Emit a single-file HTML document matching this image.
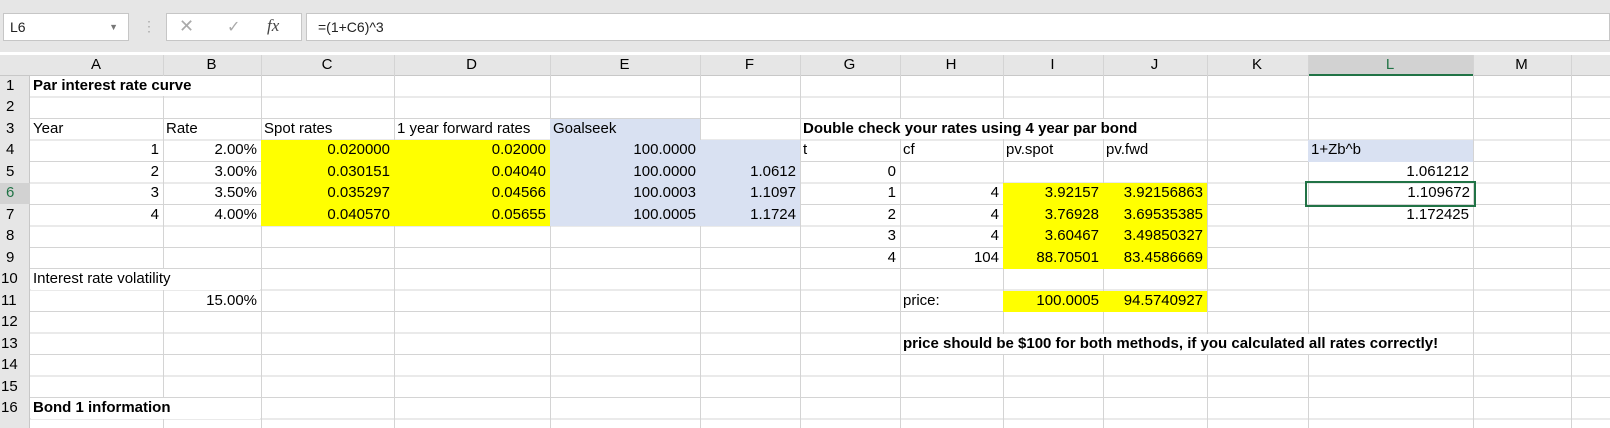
<!DOCTYPE html>
<html><head><meta charset="utf-8"><style>
*{margin:0;padding:0;box-sizing:border-box}
body{width:1610px;height:428px;overflow:hidden;background:#fff;font-family:"Liberation Sans",Arial,sans-serif;position:relative;font-size:15px}
.top{position:absolute;left:0;top:0;width:1610px;height:52px;background:#e6e6e6}
.nb{position:absolute;left:3px;top:13px;width:126px;height:28px;background:#fff;border:1px solid #c6c6c6;font-size:14px;line-height:26px;padding-left:6px;color:#222}
.fx{position:absolute;left:166px;top:13px;width:136px;height:28px;background:#fff;border:1px solid #c6c6c6}
.fb{position:absolute;left:306px;top:13px;width:1304px;height:28px;background:#fff;border:1px solid #c6c6c6;font-size:14px;line-height:26px;padding-left:11px;color:#222}
.hl{position:absolute;left:0;top:76px;width:1610px;height:344px;background:repeating-linear-gradient(to bottom,transparent 0,transparent 20.47px,#d4d4d4 20.47px,#d4d4d4 21.47px)}
.v{position:absolute;top:55px;height:373px;width:1px;background:#d4d4d4}
.hdr{position:absolute;left:0;top:55px;width:1610px;height:21px;background:#e6e6e6;border-bottom:1px solid #c8c8c8}
.rhc{position:absolute;left:0;top:76px;width:30px;height:352px;background:#e6e6e6;border-right:1px solid #c8c8c8}
.g{position:absolute;left:0;top:55px;display:grid;grid-template-columns:30px 133px 98px 133px 156px 150px 100px 100px 103px 100px 104px 101px 165px 98px;grid-template-rows:21px repeat(16,21.47px)}
.g>div{padding:0 3px;white-space:nowrap;line-height:20px;border-right:1px solid transparent;border-bottom:1px solid transparent}
.c{text-align:center}
.r{text-align:right}.y{background:#ffff00}.bl{background:#d9e1f2}.b{font-weight:bold}
.w{background:#fff;background-clip:padding-box;margin-left:1px;padding-left:2px!important}
.rn{padding-left:6px!important}
</style></head><body>
<div class="top"></div>
<div class="nb">L6<span style="position:absolute;right:10px;top:0;font-size:9px;color:#777">▼</span></div>
<div style="position:absolute;left:142px;top:18px;color:#aaa;font-size:14px">⋮</div>
<div class="fx"><span style="position:absolute;left:12px;top:2px;color:#aaa;font-size:18px">✕</span><span style="position:absolute;left:60px;top:3px;color:#aaa;font-size:16px">✓</span><span style="position:absolute;left:100px;top:2px;font-family:'Liberation Serif',serif;font-style:italic;font-size:17px;color:#444">fx</span></div>
<div class="fb">=(1+C6)^3</div>
<div class="hl"></div>
<div class="hdr"></div>
<div class="rhc"></div>
<div style="position:absolute;left:1308px;top:55px;width:165px;height:21px;background:#d2d2d2;border-bottom:2px solid #217346"></div>
<div style="position:absolute;left:0;top:183px;width:30px;height:21px;background:#d2d2d2"></div>
<div class="v" style="left:163px"></div><div class="v" style="left:261px"></div><div class="v" style="left:394px"></div><div class="v" style="left:550px"></div><div class="v" style="left:700px"></div><div class="v" style="left:800px"></div><div class="v" style="left:900px"></div><div class="v" style="left:1003px"></div><div class="v" style="left:1103px"></div><div class="v" style="left:1207px"></div><div class="v" style="left:1308px"></div><div class="v" style="left:1473px"></div><div class="v" style="left:1571px"></div>
<div class="g">
<div style="grid-area:1/2" class="c">A</div><div style="grid-area:1/3" class="c">B</div><div style="grid-area:1/4" class="c">C</div><div style="grid-area:1/5" class="c">D</div><div style="grid-area:1/6" class="c">E</div><div style="grid-area:1/7" class="c">F</div><div style="grid-area:1/8" class="c">G</div><div style="grid-area:1/9" class="c">H</div><div style="grid-area:1/10" class="c">I</div><div style="grid-area:1/11" class="c">J</div><div style="grid-area:1/12" class="c">K</div><div style="grid-area:1/13;color:#217346" class="c">L</div><div style="grid-area:1/14" class="c">M</div>
<div style="grid-area:2/1" class="rn">1</div><div style="grid-area:3/1" class="rn">2</div><div style="grid-area:4/1" class="rn">3</div><div style="grid-area:5/1" class="rn">4</div><div style="grid-area:6/1" class="rn">5</div><div style="grid-area:7/1;color:#217346" class="rn">6</div><div style="grid-area:8/1" class="rn">7</div><div style="grid-area:9/1" class="rn">8</div><div style="grid-area:10/1" class="rn">9</div><div style="grid-area:11/1;padding-left:1px">10</div><div style="grid-area:12/1;padding-left:1px">11</div><div style="grid-area:13/1;padding-left:1px">12</div><div style="grid-area:14/1;padding-left:1px">13</div><div style="grid-area:15/1;padding-left:1px">14</div><div style="grid-area:16/1;padding-left:1px">15</div><div style="grid-area:17/1;padding-left:1px">16</div>
<div style="grid-area:2/2/3/4" class="b w">Par interest rate curve</div>
<div style="grid-area:4/2">Year</div><div style="grid-area:4/3">Rate</div><div style="grid-area:4/4">Spot rates</div><div style="grid-area:4/5">1 year forward rates</div><div style="grid-area:4/6" class="bl">Goalseek</div><div style="grid-area:4/8/5/12" class="b w">Double check your rates using 4 year par bond</div>
<div style="grid-area:5/2" class="r">1</div><div style="grid-area:5/3" class="r">2.00%</div><div style="grid-area:5/4" class="r y">0.020000</div><div style="grid-area:5/5" class="r y">0.02000</div><div style="grid-area:5/6" class="r bl">100.0000</div><div style="grid-area:5/7" class="bl"></div><div style="grid-area:5/8">t</div><div style="grid-area:5/9">cf</div><div style="grid-area:5/10">pv.spot</div><div style="grid-area:5/11">pv.fwd</div><div style="grid-area:5/13" class="bl">1+Zb^b</div>
<div style="grid-area:6/2" class="r">2</div><div style="grid-area:6/3" class="r">3.00%</div><div style="grid-area:6/4" class="r y">0.030151</div><div style="grid-area:6/5" class="r y">0.04040</div><div style="grid-area:6/6" class="r bl">100.0000</div><div style="grid-area:6/7" class="r bl">1.0612</div><div style="grid-area:6/8" class="r">0</div><div style="grid-area:6/13" class="r">1.061212</div>
<div style="grid-area:7/2" class="r">3</div><div style="grid-area:7/3" class="r">3.50%</div><div style="grid-area:7/4" class="r y">0.035297</div><div style="grid-area:7/5" class="r y">0.04566</div><div style="grid-area:7/6" class="r bl">100.0003</div><div style="grid-area:7/7" class="r bl">1.1097</div><div style="grid-area:7/8" class="r">1</div><div style="grid-area:7/9" class="r">4</div><div style="grid-area:7/10" class="r y">3.92157</div><div style="grid-area:7/11" class="r y">3.92156863</div><div style="grid-area:7/13;outline:2px solid #217346;outline-offset:0px;margin:0 -1px 0 -1px" class="r">1.109672</div>
<div style="grid-area:8/2" class="r">4</div><div style="grid-area:8/3" class="r">4.00%</div><div style="grid-area:8/4" class="r y">0.040570</div><div style="grid-area:8/5" class="r y">0.05655</div><div style="grid-area:8/6" class="r bl">100.0005</div><div style="grid-area:8/7" class="r bl">1.1724</div><div style="grid-area:8/8" class="r">2</div><div style="grid-area:8/9" class="r">4</div><div style="grid-area:8/10" class="r y">3.76928</div><div style="grid-area:8/11" class="r y">3.69535385</div><div style="grid-area:8/13" class="r">1.172425</div>
<div style="grid-area:9/8" class="r">3</div><div style="grid-area:9/9" class="r">4</div><div style="grid-area:9/10" class="r y">3.60467</div><div style="grid-area:9/11" class="r y">3.49850327</div>
<div style="grid-area:10/8" class="r">4</div><div style="grid-area:10/9" class="r">104</div><div style="grid-area:10/10" class="r y">88.70501</div><div style="grid-area:10/11" class="r y">83.4586669</div>
<div style="grid-area:11/2/12/4" class="w">Interest rate volatility</div>
<div style="grid-area:12/3" class="r">15.00%</div><div style="grid-area:12/9">price:</div><div style="grid-area:12/10" class="r y">100.0005</div><div style="grid-area:12/11" class="r y">94.5740927</div>
<div style="grid-area:14/9/15/14" class="b w">price should be $100 for both methods, if you calculated all rates correctly!</div>
<div style="grid-area:17/2/18/4" class="b w">Bond 1 information</div>
</div>
</body></html>
